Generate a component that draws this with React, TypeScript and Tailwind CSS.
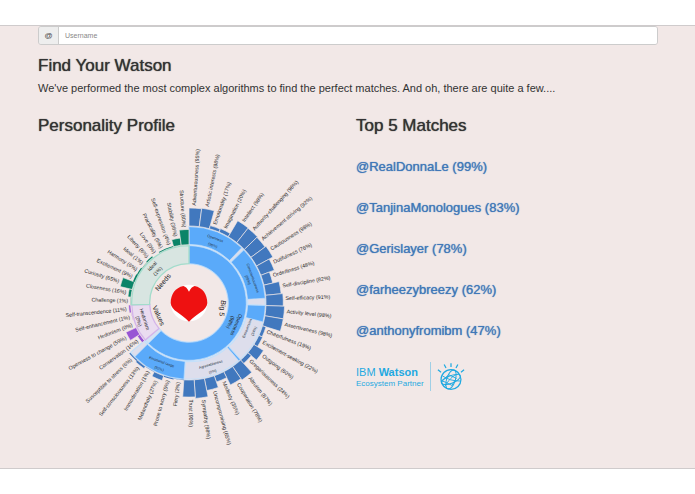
type Leaf = [name: string, score: number];

const toPoint = (radius: number, degrees: number) => {
  const a = (degrees * Math.PI) / 180;
  return `${(radius * Math.sin(a)).toFixed(2)} ${(-radius * Math.cos(a)).toFixed(2)}`;
};

const sector = (r0: number, r1: number, from: number, to: number) => {
  const large = to - from > 180 ? 1 : 0;
  return `M${toPoint(r0, from)}L${toPoint(r1, from)}A${r1} ${r1} 0 ${large} 1 ${toPoint(r1, to)}L${toPoint(r0, to)}A${r0} ${r0} 0 ${large} 0 ${toPoint(r0, from)}Z`;
};

const bigFive: Leaf[] = [
  ['Adventurousness', 95], ['Artistic interests', 98], ['Emotionality', 17],
  ['Imagination', 20], ['Intellect', 98], ['Authority-challenging', 96],
  ['Achievement striving', 92], ['Cautiousness', 98], ['Dutifulness', 76],
  ['Orderliness', 48], ['Self-discipline', 82], ['Self-efficacy', 91],
  ['Activity level', 98], ['Assertiveness', 98], ['Cheerfulness', 19],
  ['Excitement-seeking', 22], ['Outgoing', 60], ['Gregariousness', 24],
  ['Altruism', 87], ['Cooperation', 78], ['Modesty', 35],
  ['Uncompromising', 65], ['Sympathy', 98], ['Trust', 90],
  ['Fiery', 2], ['Prone to worry', 5], ['Melancholy', 27],
  ['Immoderation', 1], ['Self-consciousness', 13], ['Susceptible to stress', 6],
];

const values: Leaf[] = [
  ['Conservation', 16], ['Openness to change', 59], ['Hedonism', 0],
  ['Self-enhancement', 1], ['Self-transcendence', 11],
];

const needs: Leaf[] = [
  ['Challenge', 1], ['Closeness', 16], ['Curiosity', 65], ['Excitement', 9],
  ['Harmony', 6], ['Ideal', 1], ['Liberty', 6], ['Love', 0],
  ['Practicality', 5], ['Self-expression', 4], ['Stability', 38], ['Structure', 80],
];

const leaves = [
  ...bigFive.map(([name, score]) => ({ name, score, base: 231, fill: '#4178be' })),
  ...values.map(([name, score]) => ({ name, score, base: 175, fill: '#9855d4' })),
  ...needs.map(([name, score]) => ({ name, score, base: 175, fill: '#0a8468' })),
];

const step = 360 / leaves.length;

const traits = [
  { name: 'Openness', score: 96, fill: 0.95, x: 79, y: -194, turn: 20 },
  { name: 'Conscientiousness', score: 89, fill: 0.88, x: 192, y: -75, turn: 70 },
  { name: 'Extraversion', score: 34, fill: 0.27, x: 174, y: 76, turn: -68 },
  { name: 'Agreeableness', score: 0, fill: 0.03, x: 65, y: 184, turn: -16 },
  { name: 'Emotional range', score: 92, fill: 0.9, x: -82, y: 176, turn: 20 },
];

function Bars() {
  return (
    <>
      {leaves.map(({ name, score, base, fill }, i) => {
        const mid = (i + 0.5) * step;
        const left = mid > 181;
        const tip = base + score * 0.57;
        return (
          <g key={name}>
            <path d={sector(base, tip, i * step, (i + 1) * step)} fill={fill} stroke="#f2e8e7" strokeWidth={score > 10 ? 2 : 0} />
            <text
              transform={`rotate(${left ? mid + 90 : mid - 90})`}
              x={left ? -tip - 7 : tip + 7}
              y={left ? 5 : 1}
              textAnchor={left ? 'end' : 'start'}
              fontSize="16"
              fill="#2b2b2b"
            >
              {name} ({score}%)
            </text>
          </g>
        );
      })}
    </>
  );
}

function Sunburst() {
  const end = step * 30;
  const valuesEnd = step * 35;
  return (
    <svg viewBox="-453 -468 906 918" className="block h-auto w-full" role="img" aria-label="Personality profile">
      <path d={sector(118, 172, 0, end)} fill="#d3e2f3" stroke="#c4e0fa" strokeWidth="4" />
      <path d={sector(118, 172, 0, end * 0.98)} fill="#5aaafa" stroke="#c4e0fa" strokeWidth="2" />
      <path d={sector(118, 172, end, valuesEnd)} fill="#eadcf0" stroke="#d4b4ea" strokeWidth="4" />
      <path d={sector(118, 172, valuesEnd, 360)} fill="#d8e5e1" stroke="#a3dccb" strokeWidth="4" />
      {traits.map((t, i) => {
        const from = i * 6 * step;
        return (
          <g key={t.name}>
            <path d={sector(176, 229, from, from + 6 * step)} fill="#dddeec" stroke="#c4e0fa" strokeWidth="4" />
            <path d={sector(176, 229, from, from + 6 * step * t.fill)} fill="#5aaafa" stroke="#c4e0fa" strokeWidth="2" />
            <g transform={`translate(${t.x} ${t.y}) rotate(${t.turn})`} fontSize="11" textAnchor="middle" fill="#26323f">
              <text y="4">{t.name}</text>
              <text y={i === 1 ? 20 : 26}>({t.score}%)</text>
            </g>
          </g>
        );
      })}
      <Bars />
      <g textAnchor="middle" fill="#222222">
        <g fontSize="15">
          <g transform="translate(-110 -110) rotate(-47)">
            <text y="5">Ideal</text>
            <text y="27">(1%)</text>
          </g>
          <g transform="translate(-133 49) rotate(72)">
            <text y="5">Hedonism</text>
            <text y="24">(0%)</text>
          </g>
          <g transform="translate(142 65) rotate(113)">
            <text y="5">Openness</text>
            <text y="24">(98%)</text>
          </g>
        </g>
        <g fontSize="21">
          <text transform="translate(-78 -62) rotate(-50)" y="7">Needs</text>
          <text transform="translate(-91 38) rotate(66)" y="7">Values</text>
          <text transform="translate(101 16) rotate(97)" y="7">Big 5</text>
        </g>
      </g>
      <circle r="55" fill="#ffffff" />
      <path
        d="M0 -34C-5 -44 -10 -49 -17 -51C-41 -46 -55 -26 -55 0C-53 24 -24 30 0 56C24 30 53 24 55 0C55 -26 41 -46 17 -51C10 -49 5 -44 0 -34Z"
        fill="#ee1111"
      />
    </svg>
  );
}

function WatsonGlobe() {
  return (
    <svg viewBox="0 0 90 90" className="size-7" fill="none" stroke="#1fa9e1" strokeWidth="4" aria-hidden="true">
      <circle cx="45" cy="53" r="32" />
      <ellipse cx="45" cy="53" rx="14" ry="32" transform="rotate(18 45 53)" strokeWidth="3" />
      <ellipse cx="45" cy="53" rx="32" ry="12" transform="rotate(-22 45 53)" strokeWidth="3" />
      <path d="M17 41C34 53 52 58 75 58M25 76C34 60 50 38 70 35M15 57L38 38L62 49L48 72L28 62Z" strokeWidth="3" />
      <path d="M45 1V13M23 5L29 16M67 5L61 16M3 22L13 30M87 22L77 30" />
    </svg>
  );
}

const matches: Leaf[] = [
  ['@RealDonnaLe', 99],
  ['@TanjinaMonologues', 83],
  ['@Gerislayer', 78],
  ['@farheezybreezy', 62],
  ['@anthonyfromibm', 47],
];

const heading = 'text-[17px] leading-5 [text-shadow:0_0_1px_currentColor]';

export default function App() {
  return (
    <div className="bg-white pt-[25px] font-['Liberation_Sans',Arial,sans-serif] text-[#333333]">
      <main className="border-y border-[#cfcbcc] bg-[#f2e8e7] pr-[37px] pb-[15px] pl-[38px]">
        <div className="flex h-[19px] overflow-hidden rounded-[3px] border border-[#cccccc]">
          <label htmlFor="username" className="flex w-5 items-center justify-center border-r border-[#cccccc] bg-[#eeeeee] text-[8px] text-[#444444]">
            @
          </label>
          <input
            id="username"
            type="text"
            placeholder="Username"
            className="min-w-0 flex-1 bg-white px-[6px] pt-px text-[7px] outline-none placeholder:text-[#888888]"
          />
        </div>
        <h2 className={`mt-[11px] ${heading}`}>Find Your Watson</h2>
        <p className="mt-1 text-[11px] leading-4">
          We've performed the most complex algorithms to find the perfect matches. And oh, there are quite a few....
        </p>
        <div className="mt-5 grid grid-cols-2 gap-4">
          <section>
            <h2 className={heading}>Personality Profile</h2>
            <div className="mt-[11px]">
              <Sunburst />
            </div>
          </section>
          <section>
            <h2 className={heading}>Top 5 Matches</h2>
            <ul className="mt-[21px] flex flex-col gap-[21px]">
              {matches.map(([name, score]) => (
                <li key={name} className="text-[13px] leading-5 text-[#4078b8] [text-shadow:0_0_1px_currentColor]">
                  <a href="#">
                    {name} ({score}%)
                  </a>
                </li>
              ))}
            </ul>
            <div className="mt-[21px] flex items-center gap-1.5 text-[#1fa9e1]">
              <div>
                <div className="text-[11px] leading-[14px]">
                  IBM <b>Watson</b>
                </div>
                <div className="text-[8px] leading-[10px]">Ecosystem Partner</div>
              </div>
              <div className="h-[29px] w-px bg-[#9fcfe6]" />
              <WatsonGlobe />
            </div>
          </section>
        </div>
      </main>
    </div>
  );
}
